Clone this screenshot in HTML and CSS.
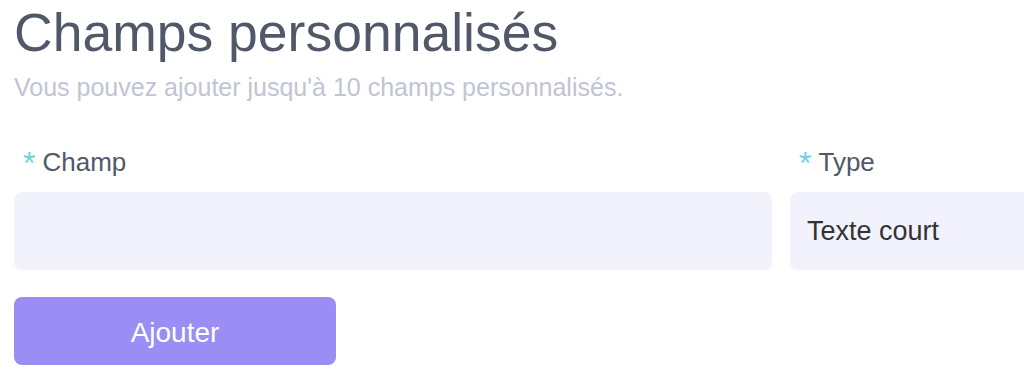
FILE: index.html
```html
<!DOCTYPE html>
<html lang="fr">
<head>
<meta charset="utf-8">
<title>Champs personnalisés</title>
<link rel="stylesheet" href="styles.css">
</head>
<body>
<main class="page">
  <h1 class="title">Champs personnalisés</h1>
  <p class="subtitle">Vous pouvez ajouter jusqu'à 10 champs personnalisés.</p>
  <div class="fields">
    <div class="field">
      <label class="label"><span class="req">*</span>Champ</label>
      <div class="input"></div>
    </div>
    <div class="field">
      <label class="label"><span class="req">*</span>Type</label>
      <div class="input">Texte court</div>
    </div>
  </div>
  <button class="btn" type="button">Ajouter</button>
</main>
</body>
</html>
```
FILE: styles.css
```css
html, body {
  margin: 0;
  padding: 0;
  overflow: hidden;
  background: #ffffff;
}
.page {
  padding: 3px 0 0 14px;
  font-family: "Liberation Sans", Arial, sans-serif;
  width: 1100px;
}
.title {
  margin: 0;
  font-size: 53.5px;
  line-height: 60px;
  font-weight: normal;
  color: #515869;
}
.subtitle {
  margin: 10px 0 0;
  font-size: 25px;
  line-height: 28px;
  color: #c1c4d4;
}
.fields {
  display: grid;
  grid-template-columns: 758px 1fr;
  column-gap: 18px;
  margin-top: 46px;
}
.field {
  display: flex;
  flex-direction: column;
  gap: 15px;
}
.label {
  display: block;
  padding-left: 9px;
  font-size: 26px;
  line-height: 30px;
  color: #515869;
}
.req {
  color: #6fd1e0;
  font-size: 32px;
  line-height: 1px;
  vertical-align: -3px;
  margin-right: 7px;
}
.input {
  height: 78px;
  box-sizing: border-box;
  border-radius: 8px;
  background: #f2f2fd;
  padding-left: 17px;
  display: flex;
  align-items: center;
  font-size: 27px;
  color: #333333;
}
.btn {
  display: block;
  margin-top: 27px;
  width: 322px;
  height: 68px;
  border: none;
  border-radius: 8px;
  background: #9a8df4;
  color: #ffffff;
  font-family: "Liberation Sans", Arial, sans-serif;
  font-size: 28px;
  padding: 3px 0 0;
}
```
